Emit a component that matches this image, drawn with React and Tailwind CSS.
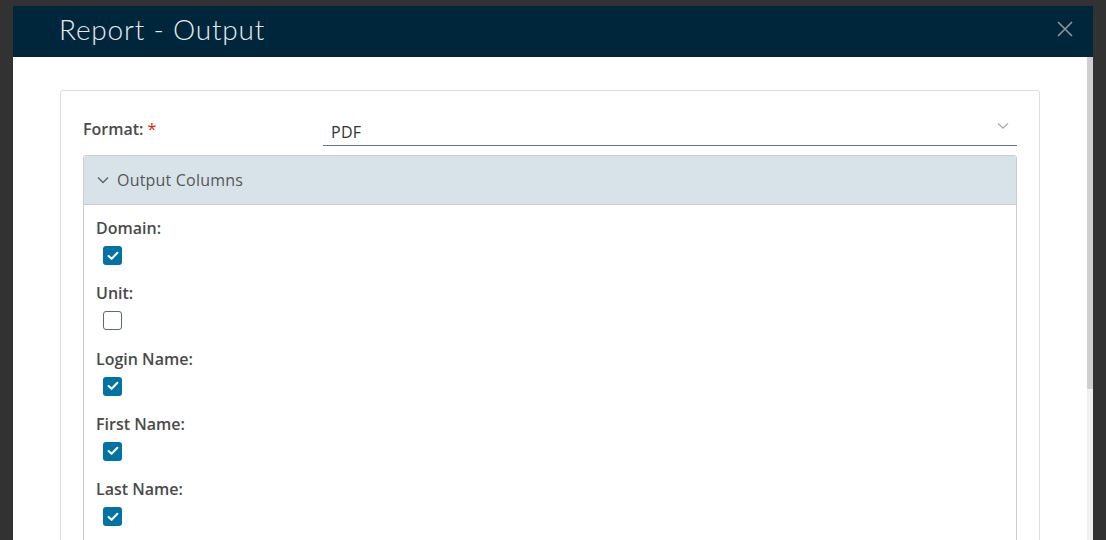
import { useState } from "react";

const columns = [
  { name: "Domain", checked: true },
  { name: "Unit", checked: false },
  { name: "Login Name", checked: true },
  { name: "First Name", checked: true },
  { name: "Last Name", checked: true },
];

const Checkbox = ({ checked, onChange }) => (
  <button
    type="button"
    onClick={onChange}
    className={
      checked
        ? "w-[19px] h-[19px] rounded-[3px] bg-[#0072a3] flex items-center justify-center"
        : "w-[19px] h-[19px] rounded-[3px] border border-[#5e6a72] bg-white"
    }
  >
    {checked && (
      <svg width="12" height="10" viewBox="0 0 12 10" fill="none">
        <path d="M1.6 5 L4.6 7.8 L10.4 1.8" stroke="white" strokeWidth="2.1" strokeLinecap="round" strokeLinejoin="round" />
      </svg>
    )}
  </button>
);

const App = () => {
  const [checks, setChecks] = useState(columns.map((c) => c.checked));

  const toggle = (i) => {
    setChecks(checks.map((c, j) => (j === i ? !c : c)));
  };

  return (
    <div
      className="w-[1106px] h-[540px] bg-[#323232] overflow-hidden pt-[6px] pl-[13px]"
      style={{ fontFamily: "'Open Sans', Lato, sans-serif" }}
    >
      <div className="w-[1080px] h-[534px] flex flex-col bg-white">
        {/* HEADER */}
        <div className="h-[51px] shrink-0 bg-[#00263b] flex items-center justify-between pl-[46px] pr-[20px]">
          <h1
            className="text-[28px] font-light text-[#e6e9eb] tracking-[0.8px] pb-[5px]"
            style={{ fontFamily: "Lato, sans-serif" }}
          >
            Report - Output
          </h1>
          <svg width="16" height="16" viewBox="0 0 16 16" className="-mt-[6px]">
            <path d="M1 1 L15 15 M15 1 L1 15" stroke="#8c959b" strokeWidth="1.6" />
          </svg>
        </div>

        {/* BODY */}
        <div className="flex flex-1 min-h-0">
          <div className="flex-1 px-[47px] pt-[33px]">
            <div className="border border-[#dddddd] rounded-[3px] h-[500px] px-[22px] pt-[24px]">
              {/* FORMAT */}
              <div className="flex items-end">
                <div className="w-[240px] text-[16px] font-semibold text-[#4a4a4a] leading-[22px] self-start pt-[3px]">
                  Format: <span className="text-[#e12200] font-normal">*</span>
                </div>
                <div className="flex-1 border-b border-[#6a7780] h-[31px] flex items-center justify-between pl-[8px] pr-[8px]">
                  <span className="text-[16px] text-[#333333] tracking-[0.3px] pt-[3px]">PDF</span>
                  <svg width="12" height="8" viewBox="0 0 12 8" className="-mt-[8px]">
                    <path d="M1 1.5 L6 6 L11 1.5" stroke="#a8afb3" strokeWidth="1.4" fill="none" />
                  </svg>
                </div>
              </div>

              {/* OUTPUT COLUMNS */}
              <div className="mt-[9px] border border-[#cccccc] rounded-[3px]">
                <div className="h-[49px] bg-[#d8e3e9] border-b border-[#cccccc] flex items-center gap-[8px] pl-[13px] rounded-t-[3px]">
                  <svg width="12" height="8" viewBox="0 0 12 8">
                    <path d="M1 1.5 L6 6.5 L11 1.5" stroke="#5b6770" strokeWidth="1.5" fill="none" />
                  </svg>
                  <span className="text-[16px] text-[#565656] tracking-[0.2px]">Output Columns</span>
                </div>
                <div className="pl-[12px] pt-[12px] h-[400px]">
                  {columns.map((c, i) => (
                    <div key={c.name} className="h-[65.3px]">
                      <div className="text-[16px] font-semibold text-[#4a4a4a] leading-[22px]">{c.name}:</div>
                      <div className="pl-[7px] pt-[7px]">
                        <Checkbox checked={checks[i]} onChange={() => toggle(i)} />
                      </div>
                    </div>
                  ))}
                </div>
              </div>
            </div>
          </div>

          {/* SCROLLBAR */}
          <div className="w-[6px] bg-[#f1f1f1] flex flex-col">
            <div className="h-[332px] bg-[#cfcfcf] rounded-b-[1px]" />
          </div>
        </div>
      </div>
    </div>
  );
};

export default App;
